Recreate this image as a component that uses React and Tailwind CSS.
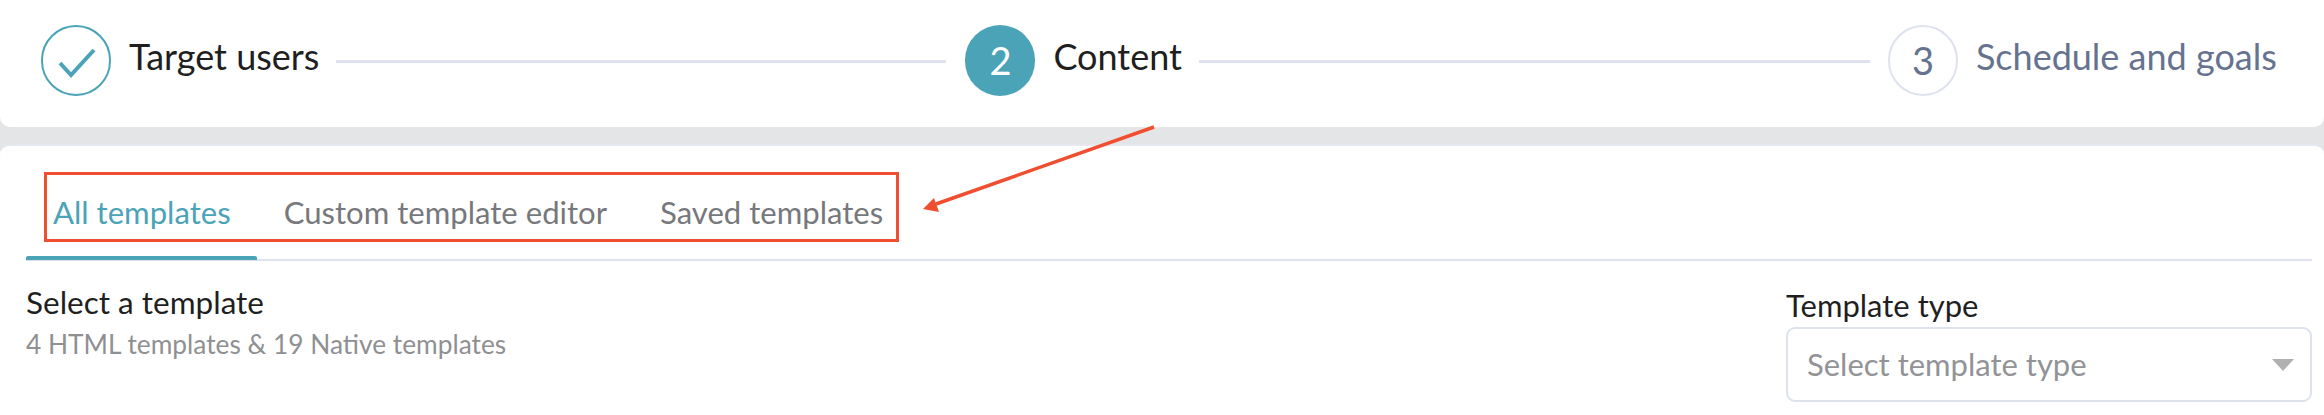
import React from "react";

const Step = ({ circle, label, labelClass }) => (
  <div className="flex items-center shrink-0">
    {circle}
    <span className={`ml-[18px] whitespace-nowrap text-[36px] leading-[44px] -mt-[9px] ${labelClass}`}>{label}</span>
  </div>
);

const Line = ({ className }) => <div className={`h-[3px] bg-[#dde2ee] mt-[1px] ${className}`} />;

export default function App() {
  return (
    <div className="relative w-[2324px] h-[415px] overflow-hidden bg-[#e4e5e7] font-['Lato',sans-serif] text-[#1f1f1f]">
      <div className="h-[127px] bg-white rounded-b-[10px] pl-[41px] pt-[25px] flex items-start">
        <div className="flex items-center h-[71px]">
          <Step
            circle={
              <div className="w-[70px] h-[71px] rounded-full border-2 border-[#4ba3b7] flex items-center justify-center">
                <svg width="66" height="67" viewBox="0 0 66 67" fill="none">
                  <polyline points="17,36 28,48 51,23" stroke="#4ba3b7" strokeWidth="4" />
                </svg>
              </div>
            }
            label="Target users"
          />
          <Line className="ml-[17px] w-[610px]" />
          <div className="ml-[19px]">
            <Step
              circle={
                <div className="w-[70px] h-[71px] rounded-full bg-[#4ba3b7] flex items-center justify-center text-white text-[38px]">2</div>
              }
              label="Content"
            />
          </div>
          <Line className="ml-[17px] w-[671px]" />
          <div className="ml-[18px]">
            <Step
              circle={
                <div className="w-[70px] h-[71px] rounded-full border-2 border-[#dde2ee] flex items-center justify-center text-[#66738f] text-[38px]">3</div>
              }
              label="Schedule and goals"
              labelClass="text-[#66738f]"
            />
          </div>
        </div>
      </div>
      <div className="mt-[17px] h-[271px] bg-white rounded-t-[10px] border-t-2 border-[#e6e8f0] pt-[26px] pl-[26px] pr-[12px]">
        <div className="border-b-2 border-[#dde2ee] h-[89px] relative">
          <div className="ml-[18px] w-[855px] h-[70px] border-[3px] border-[#f04e30] flex items-center pl-[6px] gap-[53px] text-[31.1px]">
            <span className="text-[#4ba3b7] mt-[11px]">All templates</span>
            <span className="text-[#77787b] mt-[11px]">Custom template editor</span>
            <span className="text-[#77787b] mt-[11px]">Saved templates</span>
          </div>
          <div className="absolute left-0 -bottom-[1px] w-[231px] h-[4px] rounded-t-[2px] bg-[#4ba3b7]" />
        </div>
        <div className="flex justify-between">
          <div className="pt-[22px]">
            <div className="text-[31.5px] leading-[38px]">Select a template</div>
            <div className="mt-[8px] text-[26.3px] leading-[30px] text-[#8f9092]">4 HTML templates &amp; 19 Native templates</div>
          </div>
          <div className="w-[526px] pt-[25px]">
            <div className="text-[31px] leading-[38px]">Template type</div>
            <div className="mt-[3px] h-[75px] rounded-[9px] border-2 border-[#dde2ee] flex items-center justify-between pl-[19px] pr-[16px]">
              <span className="text-[31px] text-[#929396]">Select template type</span>
              <div className="w-0 h-0 border-x-[11px] border-x-transparent border-t-[12px] border-t-[#b0b0b0]" />
            </div>
          </div>
        </div>
      </div>
      <svg className="absolute left-0 top-0 pointer-events-none" width="2324" height="415">
        <line x1="1154" y1="127" x2="936" y2="204" stroke="#f04e30" strokeWidth="3.5" />
        <polygon points="923,209 934,198 939,212" fill="#f04e30" />
      </svg>
    </div>
  );
}
